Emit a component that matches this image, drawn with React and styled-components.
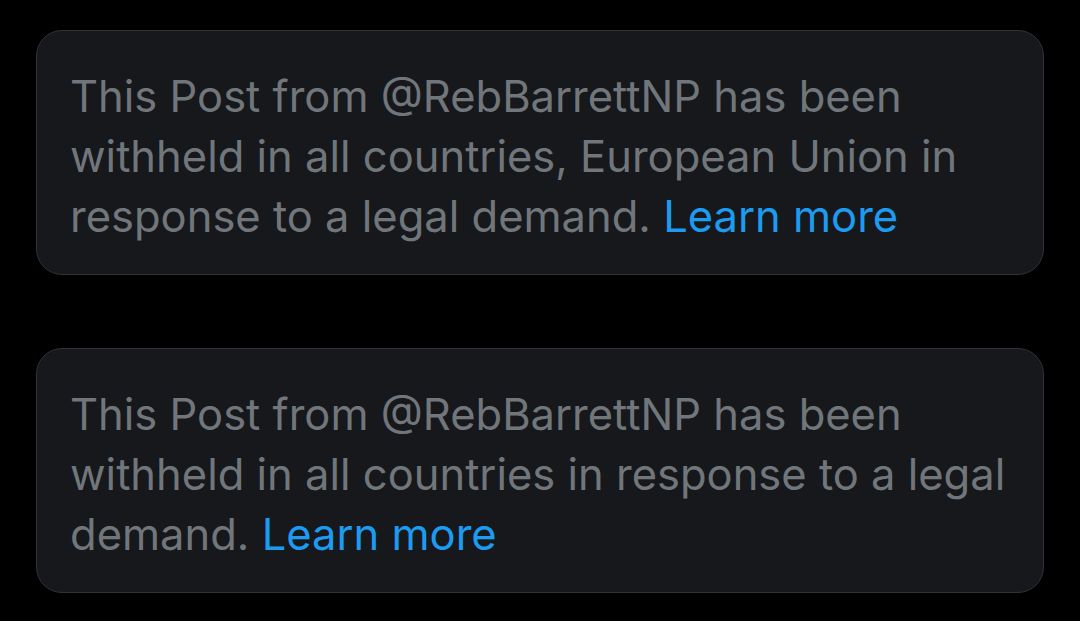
import React from 'react';
import styled, { createGlobalStyle } from 'styled-components';

const GlobalStyle = createGlobalStyle`
  html, body {
    margin: 0;
    padding: 0;
    background: #000;
  }
`;

const Wrapper = styled.div`
  display: flex;
  flex-direction: column;
  gap: 73px;
  padding: 30px 36px;
  background: #000;
  min-height: 621px;
  box-sizing: border-box;
`;

const Notice = styled.div`
  background-color: #16181c;
  border: 1px solid #2f3336;
  border-radius: 26px;
  padding: 35px 26px 29px 33px;
  height: 245px;
  box-sizing: border-box;
  font-family: Inter, 'Noto Sans', sans-serif;
  font-size: 43.5px;
  line-height: 60px;
  color: #71767b;
  p {
    margin: 0;
  }
`;

const LearnMore = styled.a`
  color: #1d9bf0;
  text-decoration: none;
`;

const notices = [
  'This Post from @RebBarrettNP has been withheld in all countries, European Union in response to a legal demand.',
  'This Post from @RebBarrettNP has been withheld in all countries in response to a legal demand.',
];

const App = () => {
  return (
    <>
      <GlobalStyle />
      <Wrapper>
        {notices.map((text) => (
          <Notice key={text}>
            <p>
              {text} <LearnMore href='#'>Learn more</LearnMore>
            </p>
          </Notice>
        ))}
      </Wrapper>
    </>
  );
};

export default App;
